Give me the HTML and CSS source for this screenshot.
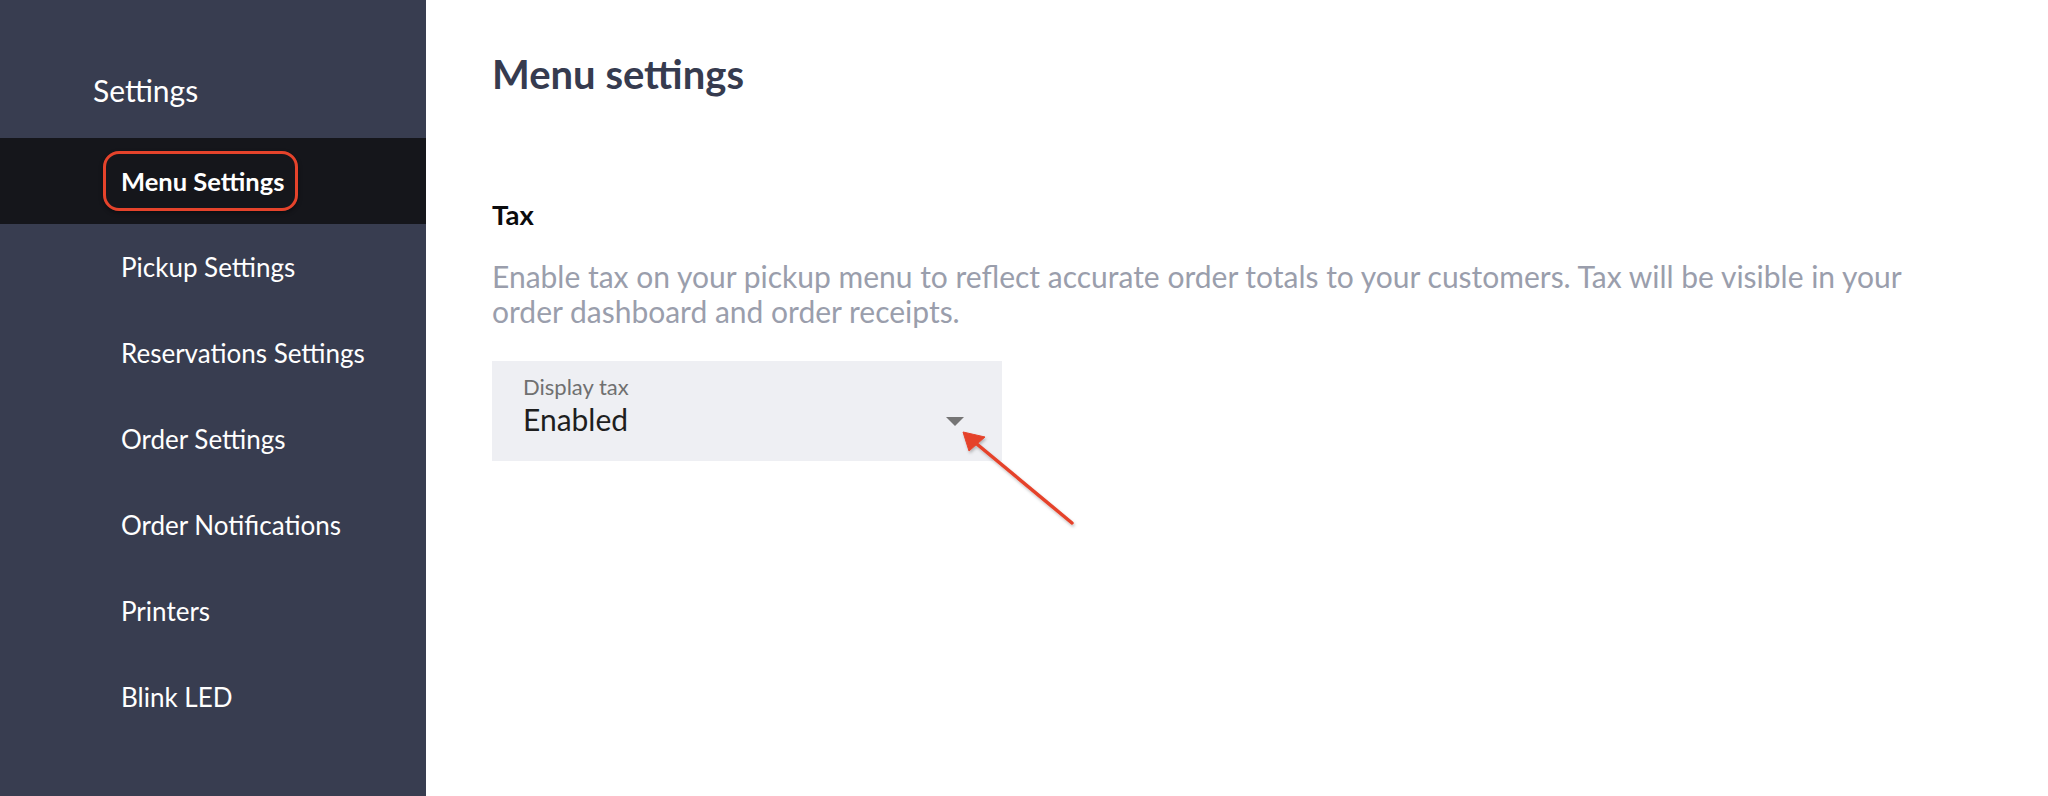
FILE: index.html
```html
<!DOCTYPE html>
<html lang="en">

<head>
    <meta charset="UTF-8">
    <meta name="viewport" content="width=device-width, initial-scale=1.0">
    <title>Menu settings</title>
    <link rel="stylesheet" href="styles.css">
</head>

<body>
    <aside class="sidebar">
        <div class="sidebar-title">Settings</div>
        <nav class="side-nav">
            <a class="nav-item active" href="#"><span class="nav-label">Menu Settings</span></a>
            <a class="nav-item" href="#">Pickup Settings</a>
            <a class="nav-item" href="#">Reservations Settings</a>
            <a class="nav-item" href="#">Order Settings</a>
            <a class="nav-item" href="#">Order Notifications</a>
            <a class="nav-item" href="#">Printers</a>
            <a class="nav-item" href="#">Blink LED</a>
        </nav>
    </aside>

    <main class="content">
        <h1>Menu settings</h1>
        <h2>Tax</h2>
        <p class="hint">Enable tax on your pickup menu to reflect accurate order totals to your customers. Tax will be visible in your order dashboard and order receipts.</p>

        <div class="select-box">
            <div class="select-text">
                <div class="select-label">Display tax</div>
                <div class="select-value">Enabled</div>
            </div>
            <svg class="select-caret" width="18" height="9" viewBox="0 0 18 9">
                <path d="M0 0 L18 0 L9 9 Z" fill="#757575" />
            </svg>
        </div>
    </main>

    <svg class="callout" width="2048" height="796" viewBox="0 0 2048 796">
        <defs>
            <filter id="shade" x="-20%" y="-20%" width="140%" height="140%">
                <feDropShadow dx="1" dy="2" stdDeviation="1.5" flood-color="#000" flood-opacity="0.25" />
            </filter>
        </defs>
        <g filter="url(#shade)" fill="#e5432b" stroke="#e5432b">
            <line x1="1072" y1="523" x2="972" y2="440" stroke-width="3.5" stroke-linecap="round" />
            <path d="M963 432 L969 451 L985 437 Z" stroke-width="1" stroke-linejoin="round" />
        </g>
    </svg>
</body>

</html>
```

FILE: styles.css
```css
body {
    margin: 0;
    height: 100vh;
    display: flex;
    font-family: Lato, "Open Sans", sans-serif;
    background-color: white;
}

.sidebar {
    width: 426px;
    flex-shrink: 0;
    background-color: #383d50;
    color: white;
    padding-top: 72px;
    box-sizing: border-box;
}

.sidebar-title {
    font-size: 30px;
    line-height: 36px;
    padding-left: 93px;
    margin-bottom: 30px;
}

.side-nav {
    display: flex;
    flex-direction: column;
}

.nav-item {
    height: 86px;
    display: flex;
    align-items: center;
    padding-left: 121px;
    font-size: 26px;
    color: white;
    text-decoration: none;
}

.nav-item.active {
    background-color: #15161b;
    font-weight: bold;
    font-size: 25.5px;
}

.nav-label {
    margin-left: -18px;
    padding: 0 11px 0 15px;
    height: 54px;
    display: flex;
    align-items: center;
    border: 3px solid #e5432b;
    border-radius: 16px;
    box-shadow: 0 2px 4px rgba(0, 0, 0, 0.4);
}

.content {
    flex: 1;
    padding: 51px 0 0 66px;
}

h1 {
    margin: 0;
    font-size: 40px;
    line-height: 46px;
    font-weight: bold;
    color: #363b4f;
}

h2 {
    margin: 102px 0 0;
    font-size: 27.5px;
    line-height: 32px;
    font-weight: bold;
    color: #0b0b0d;
}

.hint {
    margin: 28px 0 0;
    max-width: 1450px;
    font-size: 30px;
    line-height: 35px;
    color: #9a9eac;
}

.select-box {
    margin-top: 32px;
    width: 510px;
    height: 100px;
    box-sizing: border-box;
    padding: 13px 38px 0 31px;
    background-color: #eeeff3;
    display: flex;
    align-items: flex-start;
}

.select-text {
    flex: 1;
}

.select-label {
    font-size: 22px;
    line-height: 26px;
    color: #707070;
}

.select-value {
    margin-top: 1px;
    font-size: 30px;
    line-height: 36px;
    color: #1e1e1e;
}

.select-caret {
    margin-top: 43px;
}

.callout {
    position: absolute;
    left: 0;
    top: 0;
    pointer-events: none;
}
```
